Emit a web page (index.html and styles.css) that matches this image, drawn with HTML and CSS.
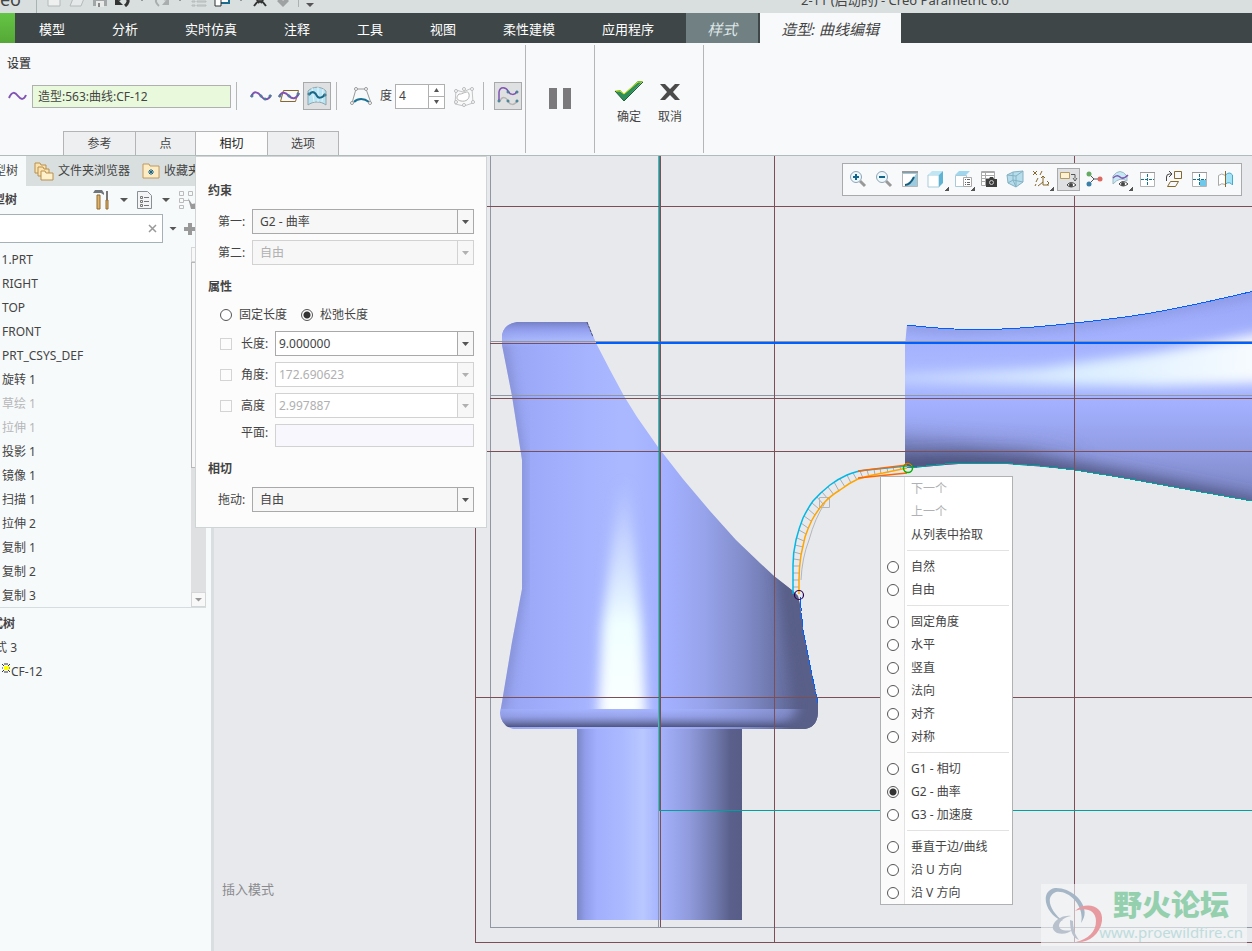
FILE: index.html
```html
<!DOCTYPE html>
<html lang="zh-CN">
  <head>
    <meta charset="UTF-8" />
    <meta name="viewport" content="width=device-width, initial-scale=1.0" />
    <title>2-11 (启动的) - Creo Parametric 6.0</title>
    <link rel="stylesheet" href="styles.css">
  </head>
  <body>
    <header class="titlebar">
      <div class="logo">creo</div>
      <div class="quick-access">
        <button aria-label="新建"><svg width="16" height="16"><path d="M2 1h12v14H2z" fill="#eef0f0" stroke="#b4b8b8" /></svg></button>
        <button aria-label="打开"><svg width="16" height="16"><path d="M1 15L5 5h11l-4 10z" fill="#e6e9e9" stroke="#b4b8b8" /></svg></button>
        <button aria-label="保存"><svg width="16" height="16"><path d="M1 1h14v14H1z" fill="#a3a6a7" /><path d="M4 10h8v6H4z" fill="#e8eaea" /><path d="M6 12h2v4H6z" fill="#888" /></svg></button>
        <button aria-label="撤消"><svg width="16" height="16"><path d="M3 9c8-5 14 0 7 6" fill="none" stroke="#333" stroke-width="3" /><path d="M0 6v8h8z" fill="#333" /></svg></button>
        <i class="caret"></i>
        <button aria-label="重做"><svg width="16" height="16"><path d="M13 9C5 4-1 9 6 15" fill="none" stroke="#a9adad" stroke-width="2" /><path d="M16 6v8H9z" fill="#a9adad" /></svg></button>
        <i class="caret"></i>
        <button aria-label="重新生成"><svg width="16" height="16"><path d="M1 10h3v1H1zM1 14h3v1H1zM6 10h9v1H6zM6 14h9v1H6z" fill="none" stroke="#b4b8b8" /></svg></button>
        <button aria-label="窗口"><svg width="16" height="16"><path d="M5 4h10v8H5z" fill="#fff" stroke="#1c6d8d" stroke-width="2" /><path d="M1 8h6v7H1z" fill="#fff" stroke="#333" /></svg></button>
        <i class="caret"></i>
        <button aria-label="关闭窗口"><svg width="16" height="16"><path d="M2 15l4-5-3-4M14 15l-4-5 3-4M6 12l2-2 2 2" fill="none" stroke="#333" stroke-width="2" /></svg></button>
        <button aria-label="选择"><svg width="16" height="16"><path d="M8 16L2 10l4-3 2 3 3-3 3 3z" fill="#9ea2a2" /></svg></button>
        <span class="bar-sep"></span>
        <i class="caret low"></i>
      </div>
      <h1>2-11 (启动的) - Creo Parametric 6.0</h1>
    </header>

    <nav class="menu-tabs">
      <button class="file-tab" aria-label="文件"></button>
      <a href="#">模型</a>
      <a href="#">分析</a>
      <a href="#">实时仿真</a>
      <a href="#">注释</a>
      <a href="#">工具</a>
      <a href="#">视图</a>
      <a href="#">柔性建模</a>
      <a href="#">应用程序</a>
      <a href="#" class="style-tab">样式</a>
      <a href="#" class="edit-tab">造型: 曲线编辑</a>
    </nav>

    <section class="ribbon">
      <div class="ribbon-group settings">
        <h2>设置</h2>
        <div class="tool-row">
          <svg width="19" height="28"><path d="M1 16C4 9 7 10 10 14s6 4 8-1" fill="none" stroke="#8153b3" stroke-width="2" /></svg>
          <input type="text" class="curve-name" aria-label="曲线" value="造型:563:曲线:CF-12">
          <span class="tool-sep"></span>
          <div class="tool-set">
            <button class="tool" aria-label="自由曲线"><svg width="26" height="26"><path d="M3 14c3-7 7-5 10-1s7 5 10-1" fill="none" stroke="#8153b3" stroke-width="2" /><g class="dots"><circle cx="4" cy="13" r="1" /><circle cx="13" cy="13" r="1" /><circle cx="17" cy="16" r="1" /><circle cx="22" cy="13" r="1" /></g></svg></button>
            <button class="tool" aria-label="平面曲线"><svg width="26" height="26"><path d="M7.500 7.500h15l-3 11h-15z" fill="none" stroke="#86682b" /><path d="M3 14c3-7 7-4 10-1s7 4 10-3" fill="none" stroke="#8153b3" stroke-width="2" /><g class="dots"><circle cx="4" cy="13" r="1" /><circle cx="13" cy="13" r="1" /><circle cx="22" cy="11" r="1" /></g></svg></button>
            <button class="tool pressed" aria-label="曲面上的曲线"><svg width="26" height="26"><path d="M4 8c5-5 13-5 18 0v14c-5-4-13-4-18 0z" fill="#b9e4f3" stroke="#8fa5ad" /><path d="M8 5l2 14M14 4v15M19 6l-1 13" stroke="#e7f6fb" /><path d="M5 12c4-6 7-1 8 1s5 3 8-2" fill="none" stroke="#1a6785" stroke-width="2" /><g class="dots"><circle cx="5" cy="11" r="1" /><circle cx="21" cy="12" r="1" /></g></svg></button>
          </div>
          <span class="tool-sep"></span>
          <button class="tool" aria-label="控制点"><svg width="26" height="26"><path d="M4 20L8 6h10l5 14" fill="none" stroke="#999" stroke-width="1" /><path d="M6 19c4-4 10-4 15 0" fill="none" stroke="#1a7193" stroke-width="2" /><g fill="#fff" stroke="#999"><circle cx="8" cy="6" r="1.500" /><circle cx="18" cy="6" r="1.500" /><circle cx="4" cy="20" r="1.500" /><circle cx="22" cy="20" r="1.500" /></g></svg></button>
          <div class="degree">
            <label for="degree">度</label>
            <div class="spinner">
              <input type="text" id="degree" value="4">
              <div class="steps">
                <button aria-label="增加"><i class="caret up"></i></button>
                <button aria-label="减少"><i class="caret"></i></button>
              </div>
            </div>
          </div>
          <button class="tool" aria-label="按比例更新" disabled><svg width="26" height="26"><path d="M5 7l7 2 9-4 1 15-9 3-9-2z" fill="none" stroke="#c4c4c4" /><path d="M8 11c3 1 9-5 10 0s-3 8-8 7-5-4-2-7z" fill="#fff" stroke="#b4b4b4" /><g fill="#fff" stroke="#bbb"><circle cx="5" cy="8" r="1.500" /><circle cx="13" cy="6" r="1.500" /><circle cx="21" cy="6" r="1.500" /><circle cx="22" cy="19" r="1.500" /><circle cx="13" cy="22" r="1.500" /><circle cx="5" cy="19" r="1.500" /></g></svg></button>
          <span class="tool-sep"></span>
          <button class="tool pressed" aria-label="显示原始"><svg width="26" height="26"><path d="M4 17V9c1-6 7-5 9-1s7 5 9 0" fill="none" stroke="#8153b3" stroke-width="1.500" /><path d="M5 18c2-5 6-4 8 0s6 5 9 0" fill="none" stroke="#b5b5b5" stroke-width="1.500" /><g class="dots"><circle cx="13" cy="9" r="1" /><circle cx="22" cy="9" r="1" /><circle cx="4" cy="18" r="1" /><circle cx="13" cy="18" r="1" /><circle cx="22" cy="18" r="1" /></g></svg></button>
        </div>
        <div class="dash-tabs">
          <button>参考</button>
          <button class="narrow">点</button>
          <button class="active">相切</button>
          <button>选项</button>
        </div>
      </div>
      <div class="ribbon-group pause">
        <button aria-label="暂停"><svg width="24" height="22"><path d="M0 0h8v21H0zM14 0h8v21h-8z" fill="#7b797b" /></svg></button>
      </div>
      <div class="ribbon-group finish">
        <button>
          <svg width="30" height="22"><path d="M1 10l5-1 4 4L24 0h5L10 20z" fill="#2f8f5b" /><path d="M1 10h5l4 3L24 1h5" fill="none" stroke="#d5e800" /><path d="M1 10l9 10L29 1" fill="none" stroke="#1f5e35" /></svg>
          确定
        </button>
        <button>
          <svg width="22" height="22"><path d="M1 3h5l5 5 5-5h5l-7 8 7 8h-5l-5-5-5 5H1l7-8z" fill="#4b4b4b" /></svg>
          取消
        </button>
      </div>
    </section>

    <main class="workspace">
      <aside class="sidebar">
        <div class="side-tabs">
          <button class="cut active">模型树</button>
          <button class="browser">
            <svg width="20" height="20"><g fill="#fbe3b0" stroke="#b98f4d"><path d="M1 2h5l1 2h5v8H1z" /><path d="M4 6h5l1 2h5v7H4z" /><path d="M7 10h4l1 2h7v7H7z" fill="#fff0cc" /></g></svg>
            文件夹浏览器
          </button>
          <button class="favorites">
            <svg width="18" height="18"><path d="M1 2h6l1 2h9v12H1z" fill="#fdebc4" stroke="#c09a5c" /><path d="M9 7v6M6 10h6M7 8l4 4M11 8l-4 4" stroke="#15658a" /></svg>
            收藏夹
          </button>
        </div>
        <div class="tree-head">
          <h3 class="cut">模型树</h3>
          <button aria-label="设置"><svg width="20" height="22"><path d="M1 4l2-3h7l2 3v2l-3-2H1z" fill="#70777c" /><path d="M5 6h3v14H5z" fill="#e3b368" stroke="#8e6a33" /><path d="M15 2v9" stroke="#777" stroke-width="2" /><path d="M14 11h2v9h-2z" fill="#e3b368" stroke="#8e6a33" /></svg></button>
          <i class="caret"></i>
          <button aria-label="显示"><svg width="18" height="22"><path d="M1.500 2.500h10l4 4v13h-14z" fill="#f3f5f7" stroke="#8a8f94" /><path d="M8 8.500h5M8 12.500h5M8 16.500h5" stroke="#777" /><path d="M4.500 7.500h2v2h-2zM4.500 11.500h2v2h-2zM4.500 15.500h2v2h-2z" fill="none" stroke="#777" /></svg></button>
          <i class="caret"></i>
          <button aria-label="过滤"><svg width="20" height="22"><g fill="none" stroke="#bbb"><path d="M1.500 2.500h4v4h-4zM1.500 9.500h4v4h-4zM1.500 16.500h4v3h-4zM10.500 2.500h4v4h-4zM5 11.500h6" /></g><path d="M10 9l4 6 5-1v6h-6z" fill="#999" /></svg></button>
        </div>
        <div class="search-row">
          <div class="search-box">
            <input type="text" aria-label="搜索">
            <button aria-label="清除"><svg width="9" height="9"><path d="M1 1l7 7M8 1L1 8" stroke="#999" stroke-width="1.500" /></svg></button>
          </div>
          <i class="caret"></i>
          <button aria-label="添加"><svg width="14" height="14"><path d="M5 1h4v4h4v4H9v4H5V9H1V5h4z" fill="#999" /></svg></button>
        </div>
        <div class="tree">
          <ul>
            <li class="root">2-11.PRT</li>
            <li>RIGHT</li>
            <li>TOP</li>
            <li>FRONT</li>
            <li>PRT_CSYS_DEF</li>
            <li>旋转 1</li>
            <li class="hidden-item">草绘 1</li>
            <li class="hidden-item">拉伸 1</li>
            <li>投影 1</li>
            <li>镜像 1</li>
            <li>扫描 1</li>
            <li>拉伸 2</li>
            <li>复制 1</li>
            <li>复制 2</li>
            <li>复制 3</li>
          </ul>
          <div class="scrollbar">
            <button aria-label="向上滚动"></button>
            <div class="thumb"></div>
            <button class="down" aria-label="向下滚动"><i class="caret"></i></button>
          </div>
        </div>
        <div class="style-tree">
          <h3 class="cut">样式树</h3>
          <ul>
            <li class="cut">样式 3</li>
            <li><svg width="9" height="20"><path d="M2 7h5v4H2z" fill="#ff0" /><path d="M0 5l2 2M8 5L6 7M0 13l2-2M8 13l-2-2M3 4v2M5 4v2M3 12v2M5 12v2M0 9h1M7 9h1" stroke="#333" /></svg>CF-12</li>
          </ul>
        </div>
      </aside>

      <section class="viewport">
        <svg class="scene" viewBox="214 156 1038 795" preserveAspectRatio="xMinYMin slice">
          <defs>
            <linearGradient id="body" gradientUnits="userSpaceOnUse" x1="500" y1="0" x2="820" y2="0">
              <stop offset="0" stop-color="#98a4f0" />
              <stop offset="0.12" stop-color="#9dabfa" />
              <stop offset="0.28" stop-color="#a6b4ff" />
              <stop offset="0.4" stop-color="#aab9ff" />
              <stop offset="0.52" stop-color="#a3b0ff" />
              <stop offset="0.64" stop-color="#97a3ea" />
              <stop offset="0.76" stop-color="#828dcb" />
              <stop offset="0.87" stop-color="#6a73a6" />
              <stop offset="0.94" stop-color="#595f8a" />
            </linearGradient>
            <linearGradient id="stem">
              <stop offset="0" stop-color="#7b86c4" />
              <stop offset="0.05" stop-color="#919dea" />
              <stop offset="0.12" stop-color="#a1affd" />
              <stop offset="0.28" stop-color="#abbaff" />
              <stop offset="0.4" stop-color="#b9c8ff" />
              <stop offset="0.5" stop-color="#a5b3fd" />
              <stop offset="0.68" stop-color="#909bdd" />
              <stop offset="0.84" stop-color="#7079ad" />
              <stop offset="0.93" stop-color="#5a608b" />
              <stop offset="1" stop-color="#575d87" />
            </linearGradient>
            <linearGradient id="foot" x1="0" y1="0" x2="0" y2="1">
              <stop offset="0" stop-color="#a5b3ff" stop-opacity="0.5" />
              <stop offset="0.4" stop-color="#8d98dc" stop-opacity="0.6" />
              <stop offset="1" stop-color="#4d547e" />
            </linearGradient>
            <linearGradient id="cap" x1="0" y1="0" x2="0" y2="1">
              <stop offset="0" stop-color="#7580c4" />
              <stop offset="0.3" stop-color="#8f9bea" stop-opacity="0.8" />
              <stop offset="0.7" stop-color="#adbcff" stop-opacity="0.7" />
              <stop offset="1" stop-color="#9fadfa" stop-opacity="0" />
            </linearGradient>
            <linearGradient id="horn" gradientUnits="userSpaceOnUse" x1="0" y1="300" x2="0" y2="490">
              <stop offset="0" stop-color="#9ba8f8" />
              <stop offset="0.25" stop-color="#a5b3ff" />
              <stop offset="0.4" stop-color="#acbbff" />
              <stop offset="0.55" stop-color="#a2b0fe" />
              <stop offset="0.8" stop-color="#919ce2" />
              <stop offset="1" stop-color="#7f8aca" />
            </linearGradient>
            <linearGradient id="shade">
              <stop offset="0" stop-color="#4d547e" />
              <stop offset="0.4" stop-color="#4d547e" stop-opacity="0.7" />
              <stop offset="1" stop-color="#4d547e" stop-opacity="0" />
            </linearGradient>
            <linearGradient id="shine">
              <stop offset="0" stop-color="#cfdcff" stop-opacity="0.6" />
              <stop offset="0.5" stop-color="#e0f4ff" stop-opacity="0.9" />
              <stop offset="1" stop-color="#fff" />
            </linearGradient>
            <linearGradient id="glow" x1="0" y1="0" x2="0" y2="1">
              <stop offset="0" stop-color="#d0deff" stop-opacity="0" />
              <stop offset="0.25" stop-color="#d6e4ff" stop-opacity="0.7" />
              <stop offset="0.55" stop-color="#f0ffff" />
              <stop offset="1" stop-color="#fff" />
            </linearGradient>
            <filter id="soft" x="-50%" y="-50%" width="200%" height="200%"><feGaussianBlur stdDeviation="6" /></filter>
            <filter id="softer" x="-50%" y="-50%" width="200%" height="200%"><feGaussianBlur stdDeviation="9" /></filter>
            <clipPath id="body-clip"><path d="M517 322h70l9 21 14 27 14 26 13 21 21 30 25 32 27 32 26 29 24 23 14 13 19 15 5 5 2 9 3 25 8 40 7 33v10q-1 14-13 16H513q-12-3-13-16l2-11 10-60 10-53V460l-10-64-10-51v-10q2-11 15-13z" /></clipPath>
            <clipPath id="above-foot"><path d="M490 322h340v387H490z" /></clipPath>
            <clipPath id="horn-clip"><path d="M907 325q33 4 63 4.500t70-3 85-9.500 127-25.500V501l-62-11-60-11-55-9-35-3.500-40-3h-35l-20 1.500-28 2.500-12-1.500V345z" /></clipPath>
          </defs>

          <!-- cone with its foot and stem -->
          <path d="M577 727h165v193H577z" fill="url(#stem)" />
          <g clip-path="url(#body-clip)">
            <path d="M490 320h340v410H490z" fill="url(#body)" />
            <path d="M498 322l3 22 18 116v127l-20 123" fill="none" stroke="#7680be" stroke-width="10" opacity="0.7" filter="url(#soft)" />
            <g clip-path="url(#above-foot)">
              <path d="M619 480h10l13 150 5 110h-50l5-110z" fill="url(#glow)" filter="url(#soft)" />
            </g>
            <path d="M500 322h96v26h-96z" fill="url(#cap)" />
            <path d="M490 709h340v18H490z" fill="url(#foot)" />
            <path d="M775 560l30 30 35 160h-70l28-40-12-70z" fill="#585e88" filter="url(#soft)" />
          </g>
          <path d="M587 322l6 15" stroke="#4a4f70" stroke-dasharray="3 1" />
          <path class="crisp" d="M800 597l3 33 8 40 7 33" fill="none" stroke="#0060ff" stroke-dasharray="14 2" />

          <!-- flared part on the right -->
          <g clip-path="url(#horn-clip)">
            <path d="M900 285h360v220H900z" fill="url(#horn)" />
            <path d="M860 376l180-8 120-16 140-26v56l-140 4-120-1-180-2z" fill="url(#shine)" filter="url(#soft)" />
            <path d="M895 325q45 5 75 4t70-3 85-10 137-26" fill="none" stroke="#7d88c8" stroke-width="6" opacity="0.8" filter="url(#soft)" />
            <path d="M870 435l220 10v40H870z" fill="url(#shade)" filter="url(#softer)" opacity="0.5" />
            <path d="M860 468l105-5 60 2 60 10 70 13 140 28" fill="none" stroke="#3f4569" stroke-width="16" filter="url(#softer)" />
          </g>
          <path class="crisp" d="M907 325q33 4 63 4.500t70-3 85-9.500 127-25.500" fill="none" stroke="#0060ff" />
          <path class="crisp" d="M907 468l10-1 28-3 20-1h35l40 3 35 4 55 9 60 11 62 11" fill="none" stroke="#00a09c" />

          <!-- datum planes -->
          <g class="crisp" fill="none">
            <path d="M490.500 156v771.500H1252M658.500 156v771M490 341.500h762M490 395.500h762" stroke="#9196a3" />
            <path d="M475.500 156v786.500H1252M660.500 156v771M774.500 156v786M1074.500 156v786M475 206.500h777M490 343.500h762M490 398.500h762M475 451.500h777M475 697.500h777" stroke="#7b4f55" />
            <path d="M659.500 156v654.500H1252" stroke="#00a09c" />
            <path d="M596 342.500h656" stroke="#0060ff" stroke-width="2" />
          </g>

          <!-- edited curve with its curvature comb -->
          <g fill="none">
            <path stroke="#aaabae" d="M793 587h6M793 580h6M793 573h6M793 566l7 0M794 559l6 1M794 552l7 2M795 545l8 2M797 538l7 3M799 530l7 4M801 523l7 5M804 516l7 5M808 509l7 6M812 503l7 6M817 497l6 7M822 492l6 7M828 487l6 8M834 482l5 9M840 479l5 8M847 475l4 8M853 473l4 7M860 471l3 7M867 470l2 7M874 469l1 6M880 468l1 6M887 468l1 5M893 467l1 4M900 467l1 3" />
            <path stroke="#b4b5b8" d="M801 580q1-22 8-40 6-22 16-37M819.500 497.500h10v10h-10z" />
            <path stroke="#00b8e6" stroke-width="1.500" d="M793 594v-29q0-12 3-25 3-12 7-22 5-10 10-17 7-8 17-16 8-6 17-10 9-4 20-5l20-2 20-2" />
            <path stroke="#ffa500" stroke-width="1.500" d="M799 594v-14q0-12 2-25 2-9 4-18 3-9 7-17 5-9 11-16 7-8 17-14 9-7 18-11 12-4 25-6l24-5" />
            <path stroke="#ff6400" d="M858 471l49-6M858 478l49-5" stroke-width="1.500" />
            <circle cx="908" cy="468" r="4.500" stroke="#00b400" stroke-width="1.500" />
            <path d="M904 465q4-4 8 1" stroke="#ff6400" />
            <circle cx="799" cy="595" r="4.500" stroke="#2a0050" stroke-width="1.200" />
          </g>
        </svg>

        <p class="status">插入模式</p>

        <div class="view-toolbar">
          <button aria-label="放大"><svg width="20" height="20"><path d="M11 11l5 5" stroke="#999" stroke-width="3" /><circle cx="7" cy="7" r="5.500" fill="#eef8fc" stroke="#8da5b4" /><path d="M7 4v6M4 7h6" stroke="#12658a" stroke-width="2" /></svg></button>
          <button aria-label="缩小"><svg width="20" height="20"><path d="M11 11l5 5" stroke="#999" stroke-width="3" /><circle cx="7" cy="7" r="5.500" fill="#eef8fc" stroke="#8da5b4" /><path d="M4 7h6" stroke="#12658a" stroke-width="2" /></svg></button>
          <button aria-label="重画"><svg width="20" height="20"><path d="M1.500 1.500h15v15h-15z" fill="#9ccbdf" /><path d="M2 4h13L6 16H2z" fill="#fff" /><path d="M1.500 1.500h15v15h-15z" fill="none" stroke="#b4b7ba" /><path d="M1 2h16" stroke="#999" stroke-width="2" /><path d="M4 15q5 0 9-8" fill="none" stroke="#155f7e" stroke-width="2" /></svg></button>
          <button class="more" aria-label="显示样式"><svg width="20" height="20"><path d="M1 5h11v12H1z" fill="#fff" stroke="#a9cbd9" /><path d="M1 5l4-4h11l-4 4z" fill="#bfe6f5" /><path d="M12 5l4-4v12l-4 4z" fill="#5eb4d4" /></svg></button>
          <button class="more" aria-label="已保存方向"><svg width="20" height="20"><path d="M1.500 5.500h11v11h-11z" fill="#fff" stroke="#a9cbd9" /><path d="M1 5l4-4h11l-4 4z" fill="#9fd8ee" /><path d="M9.500 7.500h8v9h-8z" fill="#fff" stroke="#aaa" /><path d="M11 9.500h1M13 9.500h3M11 12.500h1M13 12.500h3M11 14.500h1M13 14.500h3" stroke="#666" /></svg></button>
          <button aria-label="视图管理器"><svg width="20" height="20"><path d="M1.500 1.500h13v14h-13z" fill="#fff" stroke="#aaa" /><path d="M1 2.500h13M1 5.500h13M1 8.500h13M1 11.500h13M5.500 2v14" stroke="#aaa" /><path d="M6 9h3l1-2h3l1 2h3v8H6z" fill="#3d3d3d" /><circle cx="11.500" cy="12.500" r="2" fill="none" stroke="#ccc" /></svg></button>
          <button aria-label="透视图"><svg width="20" height="20"><path d="M1 5l6-3 10-1v11l-7 5-8-4z" fill="#b5ddeb" stroke="#85b2c2" /><path d="M7 2v8l-5 3M7 10l3 7M10 6l7-5M10 6v11M1 5l9 1M7 10l10 2" fill="none" stroke="#85b2c2" /></svg></button>
          <button class="more" aria-label="基准显示"><svg width="20" height="20"><path d="M1 1l4 4M5 1L1 5M10 1L8 5M6 8l-2 4M4 14l-1 2M11 7v8h6M11 12l-5 4M15 11l2 2-2 2M9 8l2-2 2 2" fill="none" stroke="#86682b" /></svg></button>
          <button class="pressed" aria-label="注释显示"><svg width="20" height="20"><path d="M1.500 2.500h9v6h-9z" fill="#fdf1d3" stroke="#b39a63" /><path d="M12 4.500h4v4M14 8l2 3 2-3" fill="none" stroke="#555" /><path d="M8 15q4-5 9 0-5 4-9 0z" fill="#fff" stroke="#444" /><circle cx="12" cy="15" r="2" fill="#444" /></svg></button>
          <button aria-label="旋转中心"><svg width="20" height="20"><path d="M4 4l5 5h7M9 9l-5 5" fill="none" stroke="#555" /><circle cx="4" cy="4" r="2.500" fill="#65aa62" /><circle cx="15" cy="9" r="2.500" fill="#e0675e" /><circle cx="4" cy="14" r="2.500" fill="#3a80a8" /></svg></button>
          <button class="more" aria-label="造型显示"><svg width="20" height="20"><path d="M2 6q7-9 14 0v5q-7-5-14 3z" fill="#c4e9f4" stroke="#9fb9c3" /><path d="M2 8q4-4 7-1t8-2" fill="none" stroke="#8153b3" stroke-width="1.500" /><path d="M8 14q4-5 9 0-5 4-9 0z" fill="#fff" stroke="#444" /><circle cx="12" cy="14" r="2" fill="#444" /></svg></button>
          <button aria-label="显示四视图"><svg width="20" height="20"><path d="M2.500 2.500h14v14h-14z" fill="#fff" stroke="#b4b4b4" /><path d="M2 2.500h15" stroke="#999" /><path d="M9.500 4v12M3 9.500h13" stroke="#12758f" stroke-dasharray="3 1" /></svg></button>
          <button aria-label="活动平面方向"><svg width="20" height="20"><path d="M10.500 1.500h7v7h-7zM6.500 11.500h8l-3 5h-8z" fill="none" stroke="#86682b" /><path d="M2.500 11V7q0-3 3-3H8M5 1l3 3-3 3" fill="none" stroke="#444" /></svg></button>
          <button aria-label="下一视图"><svg width="20" height="20"><path d="M2.500 2.500h14v14h-14z" fill="#fff" stroke="#b4b4b4" /><path d="M2 2.500h15" stroke="#999" /><path d="M10 10h6v6h-6z" fill="#6fc8ea" /><path d="M9.500 4v12M3 9.500h13" stroke="#12758f" stroke-dasharray="3 1" /></svg></button>
          <button aria-label="对称显示"><svg width="20" height="20"><path d="M2.500 5.500q3-3 7 0v9q-4-2-7 1z" fill="#fff" stroke="#aaa" /><path d="M9.500 5q4-4 7 0v10q-3-4-7-1z" fill="#a5e4f7" stroke="#4aa9c9" /><path d="M9.500 1v16" stroke="#86682b" /></svg></button>
        </div>

        <div class="context-menu">
          <div class="group">
            <button disabled>下一个</button>
            <button disabled>上一个</button>
            <button>从列表中拾取</button>
          </div>
          <div class="group">
            <label><input type="radio" name="direction">自然</label>
            <label><input type="radio" name="direction">自由</label>
          </div>
          <div class="group">
            <label><input type="radio" name="direction">固定角度</label>
            <label><input type="radio" name="direction">水平</label>
            <label><input type="radio" name="direction">竖直</label>
            <label><input type="radio" name="direction">法向</label>
            <label><input type="radio" name="direction">对齐</label>
            <label><input type="radio" name="direction">对称</label>
          </div>
          <div class="group">
            <label><input type="radio" name="direction">G1 - 相切</label>
            <label><input type="radio" name="direction" checked>G2 - 曲率</label>
            <label><input type="radio" name="direction">G3 - 加速度</label>
          </div>
          <div class="group">
            <label><input type="radio" name="direction">垂直于边/曲线</label>
            <label><input type="radio" name="direction">沿 U 方向</label>
            <label><input type="radio" name="direction">沿 V 方向</label>
          </div>
        </div>

        <div class="watermark">
          <svg width="62" height="56">
            <path d="M38 36C50 20 30 0 12 1-4 4 2 28 20 34 8 25 1 10 13 5c14-2 29 15 25 31z" fill="#a5b6c6" />
            <path d="M32 24c10-10 29-6 27 10-2 14-14 22-26 21 12-3 20-10 20-21 0-12-12-14-21-10z" fill="#e79ba0" />
            <path d="M28 29c-12-2-25 11-14 17 6 2 12 0 15-3-6 1-12 1-13-4 0-5 6-9 12-10zM27 33c0 12 3 18 9 20-4-5-6-11-6-19z" fill="#b9c1cc" />
          </svg>
          <div>
            <strong>野火论坛</strong>
            <span>www.proewildfire.cn</span>
          </div>
        </div>
      </section>

      <form class="tangent-panel">
        <h3>约束</h3>
        <div class="field">
          <label for="first">第一:</label>
          <div class="combo"><select id="first"><option>G2 - 曲率</option></select></div>
        </div>
        <div class="field">
          <label for="second">第二:</label>
          <div class="combo off"><select id="second" disabled><option>自由</option></select></div>
        </div>
        <h3>属性</h3>
        <div class="radios">
          <label><input type="radio" name="length-mode">固定长度</label>
          <label><input type="radio" name="length-mode" checked>松弛长度</label>
        </div>
        <div class="field value">
          <input type="checkbox" aria-label="锁定长度" disabled>
          <label for="len">长度:</label>
          <div class="combo"><input type="text" id="len" value="9.000000"></div>
        </div>
        <div class="field value">
          <input type="checkbox" aria-label="锁定角度" disabled>
          <label for="angle">角度:</label>
          <div class="combo off"><input type="text" id="angle" value="172.690623" disabled></div>
        </div>
        <div class="field value">
          <input type="checkbox" aria-label="锁定高度" disabled>
          <label for="height">高度</label>
          <div class="combo off"><input type="text" id="height" value="2.997887" disabled></div>
        </div>
        <div class="field value top">
          <span></span>
          <label for="plane">平面:</label>
          <input type="text" id="plane" class="plane" disabled>
        </div>
        <h3>相切</h3>
        <div class="field">
          <label for="drag">拖动:</label>
          <div class="combo"><select id="drag"><option>自由</option></select></div>
        </div>
      </form>
    </main>
  </body>
</html>
```

FILE: styles.css
```css
* {
  box-sizing: border-box;
}
body {
  margin: 0;
  height: 100vh;
  display: flex;
  flex-direction: column;
  overflow: hidden;
  font-family: "Noto Sans", "Noto Sans CJK SC", sans-serif;
  font-size: 12px;
  line-height: 18px;
  color: #444;
  background: #f8f9fb;
}
h1, h2, h3, p, ul {
  margin: 0;
  padding: 0;
  font-size: 12px;
}
ul {
  list-style: none;
}
button, input, select {
  font: inherit;
  color: inherit;
  margin: 0;
  padding: 0;
}
button {
  background: none;
  border: none;
}
svg {
  display: block;
  flex: none;
}
a {
  color: inherit;
  text-decoration: none;
}
input[type="radio"] {
  appearance: none;
  width: 12px;
  height: 12px;
  border: 1px solid #555;
  border-radius: 50%;
  background: #fff;
}
input[type="radio"]:checked {
  background: radial-gradient(circle, #333 0 3px, #fff 4px);
}
input[type="checkbox"] {
  appearance: none;
  width: 12px;
  height: 12px;
  border: 1px solid #d4d4d4;
}
.caret {
  flex: none;
  width: 8px;
  height: 4px;
  background: #555;
  clip-path: polygon(0 0, 100% 0, 50% 100%);
}
.caret.up {
  clip-path: polygon(50% 0, 100% 100%, 0 100%);
}

/* title bar */
.titlebar {
  flex: none;
  height: 13px;
  display: flex;
  align-items: flex-end;
  overflow: hidden;
  background: #d9dfdf;
}
.logo {
  width: 36px;
  padding: 0 15px 5px 0;
  display: flex;
  justify-content: flex-end;
  font-size: 18px;
  line-height: 18px;
}
.quick-access {
  display: flex;
  align-items: flex-end;
  gap: 7px;
  padding: 0 0 6px 9px;
  border-left: 1px solid #aab2b2;
}
.quick-access .caret {
  margin-bottom: 6px;
}
.quick-access .caret.low {
  margin-bottom: 0;
}
.bar-sep {
  width: 1px;
  height: 14px;
  background: #aab2b2;
}
.titlebar h1 {
  flex: 1;
  padding: 0 0 4px 487px;
  font-size: 13px;
  font-weight: 400;
  line-height: 18px;
  white-space: nowrap;
}

/* main tabs */
.menu-tabs {
  flex: none;
  height: 30px;
  display: flex;
  gap: 1px;
  background: #3e4647;
  color: #fff;
  font-size: 13px;
  line-height: 32px;
}
.menu-tabs a {
  padding: 0 23px;
}
.file-tab {
  width: 15px;
  background: linear-gradient(#64c545, #55a836);
}
.menu-tabs .style-tab {
  margin-left: 8px;
  padding: 0 21px;
  background: #708083;
  color: #dfe6e6;
  font-size: 15px;
  font-style: italic;
}
.menu-tabs .edit-tab {
  margin-left: 1px;
  padding: 0 22px 0 21px;
  background: #f8f9fb;
  color: #444;
  font-size: 15px;
  font-style: italic;
}

/* ribbon */
.ribbon {
  flex: none;
  height: 113px;
  display: flex;
  border-bottom: 1px solid #b0bcbc;
}
.ribbon-group {
  background: linear-gradient(#b4b6b8, #b4b6b8) right 2px / 1px 108px no-repeat;
}
.settings {
  width: 526px;
  display: flex;
  flex-direction: column;
}
.settings h2 {
  padding: 12px 0 9px 7px;
  font-weight: 500;
}
.tool-row {
  display: flex;
  align-items: center;
  gap: 5px;
  padding-left: 8px;
}
.curve-name {
  width: 199px;
  height: 23px;
  padding: 0 5px;
  border: 1px solid #b0b0b0;
  background: #e9fadc;
}
.tool-sep {
  width: 1px;
  height: 28px;
  margin-right: 5px;
  background: #b4b6b8;
}
.tool-set {
  display: flex;
}
.tool {
  width: 28px;
  height: 28px;
  border: 1px solid transparent;
}
.pressed {
  border: 1px solid #a9aaab;
  background: #dfe0e1;
}
.dots {
  fill: #fff;
  stroke: #17617c;
}
.degree {
  display: flex;
  align-items: center;
  gap: 3px;
}
.spinner {
  display: flex;
  width: 50px;
  height: 25px;
  border: 1px solid #b0b0b0;
  background: #fff;
}
.spinner input {
  flex: 1;
  min-width: 0;
  padding-left: 3px;
  border: none;
  background: none;
}
.steps {
  width: 16px;
  display: flex;
  flex-direction: column;
  border-left: 1px solid #b0b0b0;
}
.steps button {
  flex: 1;
  display: flex;
  align-items: center;
  justify-content: center;
}
.steps button + button {
  border-top: 1px solid #b0b0b0;
}
.steps .caret {
  width: 5px;
}
.dash-tabs {
  margin-top: auto;
  padding-left: 63px;
  display: flex;
}
.dash-tabs button {
  width: 72px;
  height: 24px;
  border: 1px solid #b4b4b4;
  border-width: 1px 0 0 1px;
  background: #eeeff1;
}
.dash-tabs button:last-child {
  border-right-width: 1px;
}
.dash-tabs .narrow {
  width: 60px;
}
.dash-tabs .active {
  background: #fcfcfc;
  color: #222;
}
.pause {
  width: 69px;
  display: grid;
  place-items: center;
}
.finish {
  width: 109px;
  display: flex;
  gap: 14px;
  padding: 38px 0 0 19px;
  align-items: flex-start;
}
.finish button {
  display: flex;
  flex-direction: column;
  align-items: center;
  gap: 5px;
}

/* sidebar */
.workspace {
  flex: 1;
  display: flex;
  min-height: 0;
  position: relative;
}
.sidebar {
  width: 214px;
  flex: none;
  border-right: 3px solid #d9dfe0;
  background: #f7fafb;
  overflow: hidden;
}
.cut {
  display: flex;
  justify-content: flex-end;
  overflow: hidden;
  white-space: nowrap;
  width: 17px;
}
.side-tabs {
  display: flex;
  height: 30px;
  background: #d9dfdf;
}
.side-tabs button {
  display: flex;
  align-items: center;
  gap: 4px;
  white-space: nowrap;
}
.side-tabs .active {
  width: 26px;
  padding-right: 8px;
  background: #f7fafb;
}
.side-tabs .browser {
  padding: 0 12px 0 8px;
}
.tree-head {
  display: flex;
  align-items: center;
  height: 28px;
  gap: 8px;
}
.tree-head h3 {
  margin-right: 67px;
}
.search-row {
  display: flex;
  align-items: center;
  gap: 6px;
}
.search-box {
  width: 163px;
  height: 29px;
  display: flex;
  align-items: center;
  padding-right: 5px;
  border: 1px solid #a4b2b6;
  border-left: none;
  background: #fff;
}
.search-box input {
  flex: 1;
  min-width: 0;
  border: none;
}
.tree {
  display: flex;
  padding-top: 4px;
  margin-right: 5px;
  border-bottom: 1px solid #d5dede;
}
.tree ul {
  flex: 1;
  overflow: hidden;
}
.tree li, .style-tree li {
  height: 24px;
  padding-left: 2px;
  line-height: 26px;
}
.tree .root {
  width: 33px;
  padding: 0;
  display: flex;
  justify-content: flex-end;
  white-space: nowrap;
}
.hidden-item {
  color: #b5b7b8;
}
.scrollbar {
  width: 15px;
  display: flex;
  flex-direction: column;
  background: #dfe0e1;
}
.scrollbar button {
  display: flex;
  align-items: center;
  justify-content: center;
  height: 15px;
  border: 1px solid #d5d6d7;
  background: #f8f8f8;
}
.scrollbar .caret {
  background: #999;
}
.scrollbar .thumb {
  height: 206px;
  border: 1px solid #b8b8b8;
  background: #f8f8f8;
}
.scrollbar .down {
  margin-top: auto;
}
.style-tree {
  padding-top: 4px;
}
.style-tree h3 {
  width: 15px;
  line-height: 23px;
}
.style-tree li {
  display: flex;
  width: auto;
}
.style-tree li.cut {
  width: 17px;
}

/* graphics area */
.viewport {
  flex: 1;
  position: relative;
  overflow: hidden;
  background: #e8e9ed;
}
.scene {
  width: 100%;
  height: 100%;
}
.crisp {
  shape-rendering: crispEdges;
}
.status {
  position: absolute;
  left: 8px;
  bottom: 53px;
  font-size: 13px;
  color: #8a8b8d;
}
.view-toolbar {
  position: absolute;
  top: 7px;
  right: 10px;
  width: 400px;
  height: 33px;
  padding: 0 3px 0 4px;
  display: flex;
  align-items: center;
  justify-content: space-between;
  border: 1px solid #a9aaab;
  background: #f8f9fb;
}
.view-toolbar button {
  width: 23px;
  height: 23px;
  display: grid;
  place-items: center;
}
.view-toolbar .more {
  background: linear-gradient(135deg, transparent 50%, #555 50%) right bottom / 4px 4px no-repeat;
}

.context-menu {
  position: absolute;
  left: 666px;
  top: 320px;
  width: 133px;
  border: 1px solid #b0b1b2;
  background: linear-gradient(90deg, #fbfbfb 23px, #e2e2e2 23px, #e2e2e2 24px, #fff 24px);
}
.context-menu .group + .group::before {
  content: "";
  display: block;
  height: 1px;
  margin: 4px 3px 4px 26px;
  background: #e2e2e2;
}
.context-menu label, .context-menu button {
  display: flex;
  align-items: center;
  width: 100%;
  height: 23px;
  gap: 12px;
  padding-left: 6px;
}
.context-menu button {
  padding-left: 30px;
}
.context-menu button:disabled {
  color: #b0b1b2;
}

.watermark {
  position: absolute;
  right: 5px;
  bottom: 5px;
  display: flex;
  justify-content: space-between;
  width: 206px;
  height: 62px;
  padding: 3px 4px 0 2px;
  background: rgba(245, 248, 248, 0.6);
}
.watermark div {
  flex: none;
  width: 144px;
  margin-left: -6px;
  display: flex;
  flex-direction: column;
  align-items: flex-end;
}
.watermark strong {
  padding-right: 14px;
  font-size: 29px;
  font-weight: 900;
  line-height: 36px;
  color: #94d0ad;
}
.watermark span {
  font-size: 15px;
  color: #bfdcdc;
}

/* tangent panel */
.tangent-panel {
  position: absolute;
  left: 195px;
  top: 0;
  width: 292px;
  padding: 24px 12px 15px;
  display: flex;
  flex-direction: column;
  gap: 6px;
  border: 1px solid #cfd4d4;
  background: #fcfcfc;
}
.tangent-panel h3 {
  line-height: 20px;
  margin-bottom: 2px;
}
.tangent-panel h3:not(:first-child) {
  padding-top: 6px;
}
.field {
  display: grid;
  grid-template-columns: 34px 1fr;
  align-items: center;
  padding-left: 10px;
}
.field.value {
  grid-template-columns: 21px 34px 1fr;
  padding-left: 12px;
}
.field.top {
  align-items: start;
}
.combo {
  height: 25px;
  display: flex;
  position: relative;
  border: 1px solid #a9a9a9;
}
.combo::before {
  content: "";
  position: absolute;
  top: 0;
  bottom: 0;
  right: 0;
  width: 15px;
  border-left: 1px solid #a9a9a9;
  background: #f7f7f7;
  pointer-events: none;
}
.combo::after {
  content: "";
  position: absolute;
  top: 10px;
  right: 4px;
  width: 7px;
  height: 4px;
  background: #555;
  clip-path: polygon(0 0, 100% 0, 50% 100%);
  pointer-events: none;
}
.combo select, .combo input {
  flex: 1;
  min-width: 0;
  appearance: none;
  border: none;
  border-radius: 0;
  background: #f7f7f7;
  padding: 0 18px 0 7px;
  opacity: 1;
}
.combo input {
  background: #fff;
  padding-left: 3px;
}
.combo.off, .combo.off::before {
  border-color: #d2d2d2;
  color: #b0b0b0;
}
.combo.off::after {
  background: #b0b0b0;
}
.radios {
  display: flex;
  gap: 14px;
  padding-left: 12px;
  line-height: 20px;
}
.radios label {
  display: flex;
  align-items: center;
  gap: 7px;
}
.plane {
  height: 23px;
  min-width: 0;
  border: 1px solid #d2d2d2;
  background: #f8f7fd;
}
```
